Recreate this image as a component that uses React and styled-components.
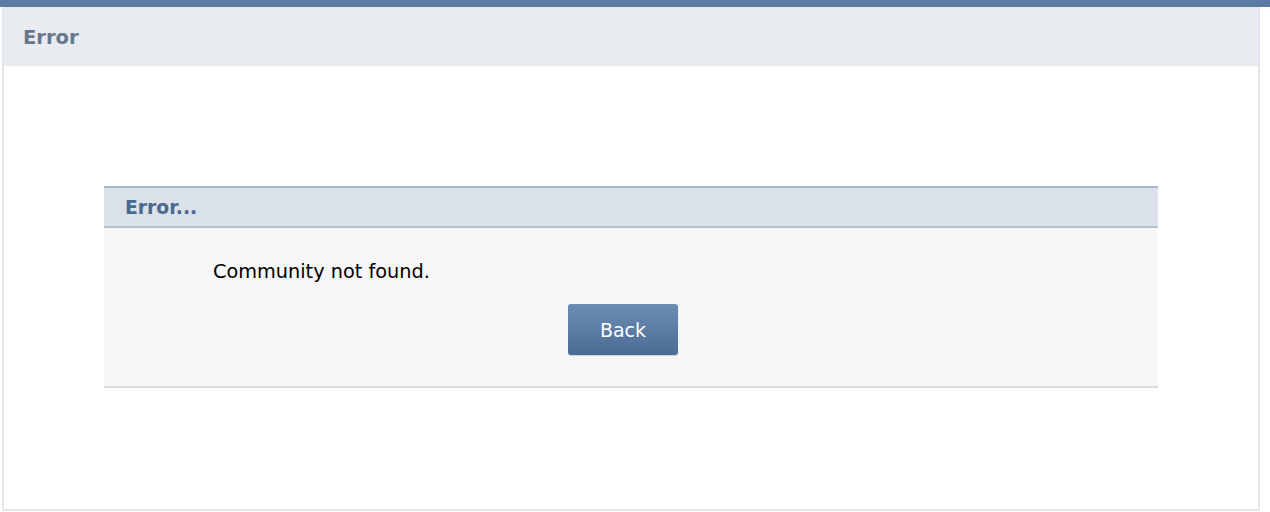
import React from "react";
import styled, { createGlobalStyle } from "styled-components";

const Global = createGlobalStyle`
  html, body { margin: 0; padding: 0; background: #ffffff; }
  body { font-family: "DejaVu Sans", "Liberation Sans", sans-serif; }
`;

const TopBar = styled.div`
  height: 7px;
  background: #5a7ca4;
`;

const Page = styled.div`
  margin: 0 10px 0 2px;
  border-left: 2px solid #e3e6eb;
  border-right: 2px solid #e3e6eb;
  border-bottom: 2px solid #e3e6eb;
  border-top: 1px solid #e3e6eb;
`;

const PageHeader = styled.div`
  height: 58px;
  background: #e8ebf0;
  display: flex;
  align-items: center;
  padding-left: 19px;
  font-size: 19.5px;
  font-weight: bold;
  color: #66778c;
`;

const PageBody = styled.div`
  background: #ffffff;
  padding: 120px 100px 121px 100px;
`;

const Box = styled.div`
  border-top: 2px solid #aab7cb;
  border-bottom: 2px solid #dcdcdc;
  background: #f6f6f6;
`;

const BoxHeader = styled.div`
  height: 38px;
  background: #dae1e8;
  border-bottom: 2px solid #b7c1ce;
  display: flex;
  align-items: center;
  padding-left: 21px;
  font-size: 18.8px;
  font-weight: bold;
  color: #4a6890;
`;

const BoxBody = styled.div`
  padding: 32px 0 31px 109px;
  display: flex;
  flex-direction: column;
  align-items: flex-start;
`;

const Message = styled.div`
  font-size: 19.3px;
  line-height: 24px;
  color: #000000;
`;

const Button = styled.button`
  margin-top: 20px;
  margin-left: 355px;
  width: 110px;
  height: 51px;
  border: none;
  border-radius: 3px;
  background: linear-gradient(#6b8cb4, #4d6c95);
  box-shadow: 0 1px 1px rgba(0, 0, 0, 0.15);
  color: #ffffff;
  font-family: "DejaVu Sans", "Liberation Sans", sans-serif;
  font-size: 19px;
  cursor: pointer;
`;

export default function App() {
  return (
    <>
      <Global />
      <TopBar />
      <Page>
        <PageHeader>Error</PageHeader>
        <PageBody>
          <Box>
            <BoxHeader>Error...</BoxHeader>
            <BoxBody>
              <Message>Community not found.</Message>
              <Button>Back</Button>
            </BoxBody>
          </Box>
        </PageBody>
      </Page>
    </>
  );
}
